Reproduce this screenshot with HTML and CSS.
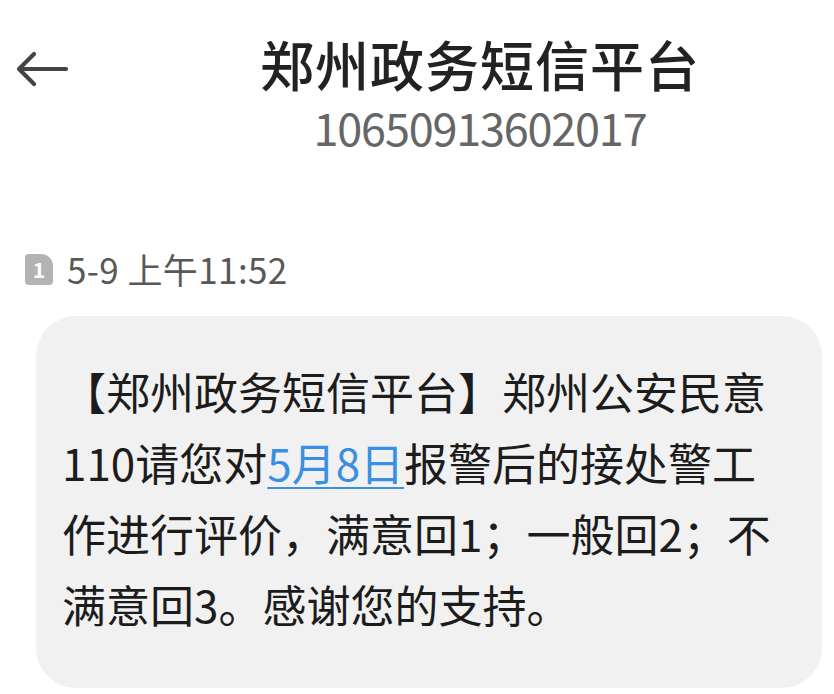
FILE: index.html
```html
<!DOCTYPE html>
<html>
<head>
    <title>郑州政务短信平台</title>
    <link rel="stylesheet" href="styles.css">
</head>
<body>
    <div class="header">
        <div class="back">
            <svg width="56" height="40" viewBox="0 0 56 40">
                <path d="M52 20 H6 M20 5 L5 20 L20 35" fill="none" stroke="#444" stroke-width="4.2" stroke-linecap="round" stroke-linejoin="round"/>
            </svg>
        </div>
        <div class="contact">
            <div class="contact-name">郑州政务短信平台</div>
            <div class="contact-number">10650913602017</div>
        </div>
    </div>

    <div class="meta">
        <span class="sim-icon">1</span>
        <span class="meta-time">5-9 上午11:52</span>
    </div>

    <div class="bubble">
        <p class="message">【郑州政务短信平台】郑州公安民意110请您对<a class="date-link" href="#">5月8日</a>报警后的接处警工作进行评价，满意回1；一般回2；不满意回3。感谢您的支持。</p>
    </div>
</body>
</html>
```

FILE: styles.css
```css
body {
    margin: 0;
    background: #ffffff;
    font-family: "Noto Sans CJK SC", "Noto Sans", sans-serif;
    color: #1c1c1c;
}

.header {
    display: flex;
    align-items: flex-start;
    padding-top: 32px;
}

.back {
    width: 126px;
    flex-shrink: 0;
    padding-top: 17px;
    padding-left: 14px;
    box-sizing: border-box;
}

.back svg {
    display: block;
}

.contact {
    flex: 1;
    text-align: center;
}

.contact-name {
    font-size: 54px;
    line-height: 64px;
    font-weight: 500;
    color: #222;
    letter-spacing: 1px;
}

.contact-number {
    margin-top: 6px;
    font-size: 45px;
    line-height: 50px;
    color: #666;
    letter-spacing: -1.2px;
}

.meta {
    display: flex;
    align-items: center;
    margin-top: 97px;
    padding-left: 25px;
    height: 40px;
}

.sim-icon {
    width: 28px;
    height: 31px;
    background: #b3b3b3;
    color: #fff;
    font-size: 21px;
    font-weight: 700;
    line-height: 31px;
    text-align: center;
    border-radius: 4px;
    border-top-right-radius: 12px;
    margin-right: 14px;
}

.meta-time {
    font-size: 35px;
    color: #585858;
    line-height: 40px;
    letter-spacing: 0.4px;
}

.bubble {
    margin: 27px 12px 0 36px;
    background: #f1f1f1;
    border-radius: 40px;
    padding: 40px 42px 48px 26px;
}

.message {
    margin: 0;
    font-size: 44px;
    line-height: 71px;
    width: 716px;
}

.date-link {
    color: #3b8fe3;
    text-decoration: underline;
    text-decoration-thickness: 2px;
    text-underline-offset: 6px;
}
```
